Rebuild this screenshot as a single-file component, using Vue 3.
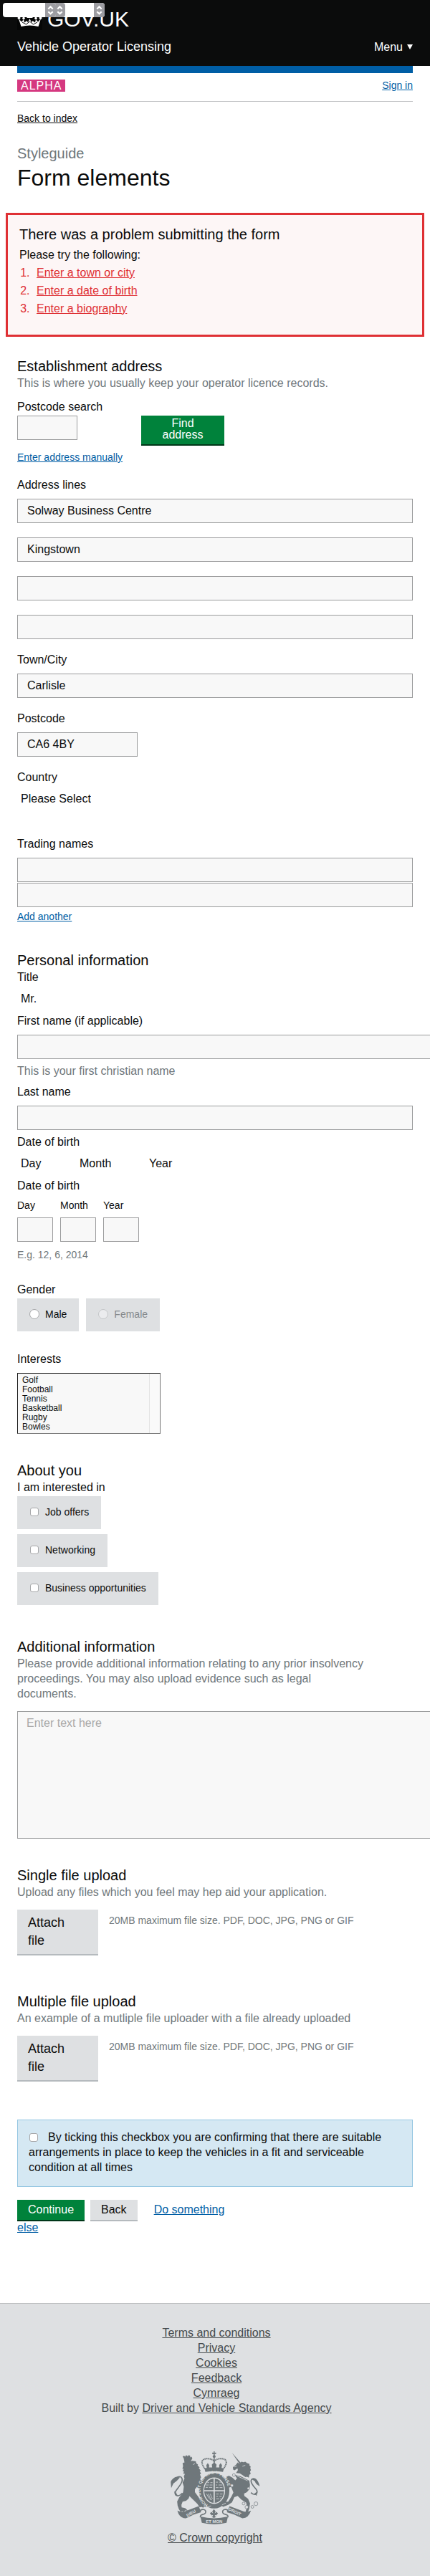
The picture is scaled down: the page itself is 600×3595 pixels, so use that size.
<script setup>
import { ref } from 'vue'

const overlays = [
  { id: 'year', cls: 'ov-c', label: 'Year' },
  { id: 'month', cls: 'ov-b', label: 'Month' },
  { id: 'day', cls: 'ov-a', label: 'Day' },
]
const errors = ['Enter a town or city', 'Enter a date of birth', 'Enter a biography']
const address = ref(['Solway Business Centre', 'Kingstown', '', ''])
const town = ref('Carlisle')
const postcode = ref('CA6 4BY')
const dateParts = ['Day', 'Month', 'Year']
const sports = ['Golf', 'Football', 'Tennis', 'Basketball', 'Rugby', 'Bowles']
const interests = ['Job offers', 'Networking', 'Business opportunities']
const uploads = [
  { title: 'Single file upload', hint: 'Upload any files which you feel may hep aid your application.' },
  { title: 'Multiple file upload', hint: 'An example of a mutliple file uploader with a file already uploaded' },
]
const footerLinks = ['Terms and conditions', 'Privacy', 'Cookies', 'Feedback', 'Cymraeg']
</script>

<template>
  <div class="page">
    <div class="overlay">
      <span v-for="o in overlays" :key="o.id" class="ov" :class="o.cls">
        <select :aria-label="o.label"><option></option></select>
        <svg viewBox="0 0 14 18" aria-hidden="true"><path d="M4 7.500 7 4.500 10 7.500M4 11 7 14 10 11" /></svg>
      </span>
    </div>

    <header class="top">
      <a href="#" class="logo" aria-label="GOV.UK">
        <svg class="crown" viewBox="0 0 35 30" aria-hidden="true">
          <rect width="35" height="30" fill="#050606" />
          <g fill="#fff">
            <path d="M2 14 5.500 25Q17.500 22 29.500 25L33 14 29 18.500 26 15 25 19.500 21.500 17 20 19.500 17.500 14 15 19.500 13.500 17 10 19.500 9 15 6 18.500Z" />
            <circle cx="2.500" cy="13" r="2" /><circle cx="3.500" cy="9.500" r="1.500" /><circle cx="32.500" cy="13" r="2" /><circle cx="31.500" cy="9.500" r="1.500" />
            <circle cx="9" cy="13.500" r="1.800" /><circle cx="26" cy="13.500" r="1.800" />
            <path d="M16.500 2h2v8h3v3h-8v-3h3z" />
          </g>
          <path d="M7 19l5.500 3 5-4 5 4 5.500-3" fill="none" stroke="#050606" />
        </svg>
        <span>GOV.UK</span>
      </a>
      <div class="top-row">
        <a href="#" class="service">Vehicle Operator Licensing</a>
        <button type="button" class="menu">Menu <span class="tri"></span></button>
      </div>
    </header>

    <main class="wrap">
      <div class="bar"></div>
      <div class="phase">
        <strong class="tag">ALPHA</strong>
        <a href="#" class="small">Sign in</a>
      </div>
      <a href="#" class="back small">Back to index</a>
      <p class="kicker">Styleguide</p>
      <h1>Form elements</h1>

      <section class="errors">
        <h2>There was a problem submitting the form</h2>
        <p>Please try the following:</p>
        <ol>
          <li v-for="e in errors" :key="e"><a href="#">{{ e }}</a></li>
        </ol>
      </section>

      <form @submit.prevent>
        <section class="first">
          <h2>Establishment address</h2>
          <p class="hint">This is where you usually keep your operator licence records.</p>
          <label class="search-label" for="search">Postcode search</label>
          <div class="search">
            <input id="search" type="text" class="field w-search">
            <button type="button" class="btn find">Find address</button>
          </div>
          <a href="#" class="small manual">Enter address manually</a>

          <label class="lines-label" for="line0">Address lines</label>
          <div class="lines">
            <input v-for="(l, i) in address" :id="'line' + i" :key="i" v-model="address[i]" type="text" class="field" :aria-label="'Address line ' + (i + 1)">
          </div>
          <div class="group">
            <label for="town">Town/City</label>
            <input id="town" v-model="town" type="text" class="field">
          </div>
          <div class="group">
            <label for="postcode">Postcode</label>
            <input id="postcode" v-model="postcode" type="text" class="field w-postcode">
          </div>
          <div class="group">
            <label for="country">Country</label>
            <select id="country" class="plain"><option>Please Select</option></select>
          </div>
          <div class="trading">
            <label for="trade1">Trading names</label>
            <div class="pair">
              <input id="trade1" type="text" class="field">
              <input type="text" class="field" aria-label="Second trading name">
            </div>
            <a href="#" class="small">Add another</a>
          </div>
        </section>

        <section class="personal">
          <h2>Personal information</h2>
          <label for="title">Title</label>
          <select id="title" class="plain"><option>Mr.</option></select>
          <label class="gap10" for="first">First name (if applicable)</label>
          <input id="first" type="text" class="field wide">
          <p class="hint after">This is your first christian name</p>
          <label class="gap8" for="last">Last name</label>
          <input id="last" type="text" class="field">
          <fieldset class="dob-select">
            <legend>Date of birth</legend>
            <div class="selects">
              <select v-for="d in dateParts" :key="d" class="plain" :class="'s-' + d" :aria-label="d"><option>{{ d }}</option></select>
            </div>
          </fieldset>
          <fieldset class="dob-input">
            <legend>Date of birth</legend>
            <div class="parts">
              <div v-for="d in dateParts" :key="d">
                <label :for="'dob' + d">{{ d }}</label>
                <input :id="'dob' + d" type="text" class="field">
              </div>
            </div>
            <p class="hint eg">E.g. 12, 6, 2014</p>
          </fieldset>
          <fieldset class="gender">
            <legend>Gender</legend>
            <div class="radios">
              <label class="choice"><input type="radio" name="gender"><span>Male</span></label>
              <label class="choice disabled"><input type="radio" name="gender" disabled><span>Female</span></label>
            </div>
          </fieldset>
          <div class="interests">
            <label for="interests">Interests</label>
            <select id="interests" multiple size="6" class="list">
              <option v-for="s in sports" :key="s">{{ s }}</option>
            </select>
          </div>
        </section>

        <section class="about">
          <h2>About you</h2>
          <fieldset>
            <legend>I am interested in</legend>
            <div class="checks">
              <label v-for="c in interests" :key="c" class="choice"><input type="checkbox"><span>{{ c }}</span></label>
            </div>
          </fieldset>
        </section>

        <section class="additional">
          <h2><label for="info">Additional information</label></h2>
          <p class="hint narrow">Please provide additional information relating to any prior insolvency proceedings. You may also upload evidence such as legal documents.</p>
          <textarea id="info" class="wide" placeholder="Enter text here"></textarea>
        </section>

        <section v-for="u in uploads" :key="u.title" class="upload">
          <h2>{{ u.title }}</h2>
          <p class="hint">{{ u.hint }}</p>
          <div class="attach-row">
            <button type="button" class="btn grey attach">Attach file</button>
            <p class="hint">20MB maximum file size. PDF, DOC, JPG, PNG or GIF</p>
          </div>
        </section>

        <label class="confirm"><input type="checkbox"><span>By ticking this checkbox you are confirming that there are suitable arrangements in place to keep the vehicles in a fit and serviceable condition at all times</span></label>

        <div class="actions">
          <button type="submit" class="btn">Continue</button>
          <button type="button" class="btn grey">Back</button>
          <a href="#">Do something else</a>
        </div>
      </form>
    </main>

    <footer>
      <ul>
        <li v-for="l in footerLinks" :key="l"><a href="#">{{ l }}</a></li>
        <li>Built by <a href="#">Driver and Vehicle Standards Agency</a></li>
      </ul>
      <a href="#" class="copyright">
        <svg class="crest" viewBox="84 62 376 308" aria-hidden="true">
          <g class="ink">
            <!-- crown -->
            <circle cx="267" cy="84" r="6" /><path d="M264 63h6l-1 5 6-1v7l-6-1 1 6h-6l1-6-6 1v-7l6 1z" />
            <path class="dots" d="M228 136C208 108 214 94 236 93 252 92 262 98 267 104 272 98 282 92 298 93 320 94 326 108 306 136" />
            <path class="line" d="M267 90V122" />
            <path d="M226 134q41-9 82 0l-4 15q-37-6-74 0zM236 134l-2-14 6-8 6 8-1 12zM259 132l-2-14 10-10 10 10-2 14zM289 132l-1-12 6-8 6 8-2 14z" />
            <!-- garter -->
            <ellipse cx="267" cy="228" rx="64" ry="75" />
            <!-- lion -->
            <path d="M139 92l-5-8 6-3 5 4 2-6 6 0 2 5 5-6 6 3 0 7 6-3 3 7-9 15-24 2z" />
            <path d="M134 112l14-6 28-4 14 2 1 8 8 6-2 4 9 8-4 2 9 12-5 1 6 12-5 2 5 14-4 4 9 15 12 8 11 12-3 6 8 14-7 4-8-7-6 7-7-8-5 6-8-13-10-9-8 10 0 12 22 30 18 12 6 10 1 12-8-4-4 6-8-4-7 2-10-15-33-32-4 10-10 9-15 4-5 14 1 10 16 4 10 10-12-1-4 6-8-3-6 4-8-13-5-14-2-18 9-17 16-21 3-24-5-17 8-17-3-9 5-11-7-1 3-10-6 0 4-10-5-1 3-10z" />
            <path class="line" d="M133 238C112 260 96 246 106 228 120 208 142 186 128 171 118 164 106 172 98 186" />
            <path d="M84 190q10-20 27-21l12 3q-14 17-28 26l-9 19zM98 230l8 6 6 10-8 2z" />
            <!-- unicorn -->
            <path d="M342 68l37 42-6 4z" />
            <path d="M372 114l10-8 9 2 7-2 8 6 10 3-1 6 6 5-2 7 3 8-4 6 3 10-6 4-2 12-8-4-6 2-24-16-16-2 8-12-2-7-12 8-6-3-1-10 12-10 8-10z" />
            <path d="M318 170l11-5 15 8 12 11 7-8-9-14 23 4 38 20 3 18-3 18-10 12-12 6 1 10 16 12 8 19-3 22-10 26-15 3 8-11 7-24-3-18-20-13-16-16-14 5-10 22-16 11-22 8-5-6 8-6 2-8 17-2 14-22 8-16-9-24-12 3 2 12-10-6-4-12 7-10-11-6-3 9-6-8z" />
            <path class="line" d="M422 236C438 252 456 240 444 222 430 208 414 186 428 178 440 174 446 184 450 194" />
            <path d="M426 180l16-2q12 8 17 31-17-7-20-20zM448 232l-12 8 10 10z" />
            <!-- ribbons -->
            <path d="M112 312q20 10 40 0l50-19 10 26q-33 8-64 25-28 0-36-32zM422 312q-20 10-40 0l-50-19-12 26q33 8 66 25 26 0 36-32z" />
            <path d="M209 337q57 15 116 0l-6 26q-52 12-104 0z" />
            <path class="line" d="M205 318C212 300 238 306 230 322 224 332 206 324 209 340M329 318C322 300 296 306 304 322 310 332 328 324 325 340" />
            <path d="M266 306l7 9-4 9 8-7 6 7-8 8-5-2 0 5 6 3-10 5-10-5 6-3 0-5-5 2-8-8 6-7 8 7-4-9z" />
          </g>
          <ellipse class="gap" cx="267" cy="228" rx="46" ry="56" />
          <ellipse class="ink" cx="267" cy="228" rx="42" ry="51" />
          <path class="cut" d="M267 177V279M225 228H309" />
          <path class="fine" d="M232 204h12m4 0h12M231 214h9m5 0h14M238 194h8m5 0h9M274 192h9m6 0h8M274 204h6m6 0h16M274 215h11m5 0h12M235 241q8 20 19 27M243 241q3 16 14 26M251 241q2 12 9 20M276 242h10m6 0h10M276 252h7m6 0h10M276 262h12m4 0h4" />
          <path class="fine" d="M386 125l12-4M352 128l10-4M178 118l8-4M364 166l44 20M300 288l16-8M236 296l18-4" />
          <g class="rings"><circle cx="350" cy="162" r="6" /><circle cx="342" cy="206" r="6" /><circle cx="411" cy="218" r="5" /><circle cx="391" cy="282" r="6" /><circle cx="404" cy="297" r="7" /><circle cx="428" cy="296" r="6" /><circle cx="443" cy="283" r="8" /></g>
          <path id="garter-line" class="none" d="M246 290A58 69 0 1 1 290 289" />
          <path id="ribbon-l" class="none" d="M154 339L202 312" />
          <path id="ribbon-r" class="none" d="M326 310L384 338" />
          <g class="words">
            <text><textPath href="#garter-line" startOffset="6">HONI SOIT QUI MAL Y PENSE</textPath></text>
            <text><textPath href="#ribbon-l">DIEU</textPath></text>
            <text><textPath href="#ribbon-r">DROIT</textPath></text>
            <text x="267" y="363" text-anchor="middle">ET MON</text>
          </g>
        </svg>
        <span>© Crown copyright</span>
      </a>
    </footer>
  </div>
</template>

<style>
body { background: #fff; }
</style>

<style scoped>
.page {
  position: relative;
  overflow-x: clip;
  font: 16px/21px "Liberation Sans", Arial, sans-serif;
  color: #0b0c0c;
}
h1, h2, p, ul, ol, fieldset, legend { margin: 0; padding: 0; border: 0; font-weight: 400; }
fieldset { min-width: 0; }
a { color: #005ea5; }
input, select, textarea, button { box-sizing: border-box; margin: 0; font: inherit; color: inherit; border-radius: 0; }
label, legend { display: block; }
h2 { font-size: 20px; line-height: 25px; }

.overlay .ov { position: absolute; top: 4px; height: 20px; border-radius: 4px; overflow: hidden; background: #fff; }
.ov-a { left: 4px; width: 74px; }
.ov-b { left: 53px; width: 38px; }
.ov-c { left: 80px; width: 66px; }
.ov select { appearance: none; display: block; width: 100%; height: 20px; border: 0; padding: 0; background: #fff; }
.ov svg { position: absolute; top: 0; right: 0; width: 15px; height: 20px; background: #9d9da2; fill: none; stroke: #fff; stroke-width: 2; pointer-events: none; }

.top { background: #0b0c0c; padding: 12px 24px 14px; }
.logo { display: flex; gap: 7px; height: 30px; color: #fff; font-size: 30px; line-height: 30px; text-decoration: none; width: max-content; }
.crown { width: 35px; height: 30px; }
.top-row { display: flex; justify-content: space-between; margin-top: 11px; line-height: 25px; }
.service { color: #fff; font-size: 18px; text-decoration: none; }
.menu { display: flex; align-items: center; gap: 6px; padding: 0; border: 0; background: none; color: #fff; line-height: 25px; }
.tri { border: 4px solid transparent; border-top: 7px solid #fff; border-bottom: 0; }

.wrap { padding: 0 24px 95px; }
.bar { height: 10px; background: #005ea5; }
.phase { display: flex; justify-content: space-between; padding: 9px 0 13px; border-bottom: 1px solid #bfc1c3; }
.tag { padding: 0 5px; background: #d53880; color: #fff; font-weight: 400; letter-spacing: 1px; line-height: 17px; }
.small { font-size: 14px; line-height: 18px; display: block; width: max-content; }
.phase .small { line-height: 17px; }
.back { margin-top: 14px; color: #0b0c0c; }
.kicker { margin-top: 28px; font-size: 20px; line-height: 25px; color: #6f777b; }
h1 { margin-top: 4px; font-size: 32px; line-height: 35px; }

.errors { margin: 31px -16px 0; padding: 15px 16px 24px; border: 3px solid #df3034; background: #fdf6f6; }
.errors p { margin-top: 5px; }
.errors ol { margin-top: 2px; padding-left: 19px; color: #df3034; line-height: 25px; }
.errors li { padding-left: 5px; }
.errors a { color: #df3034; }

.hint { color: #6f777b; }
.field { display: block; width: 100%; height: 34px; padding: 0 13px; border: 1px solid #9b9c9d; background: #f8f8f8; line-height: 21px; }
label + .field { margin-top: 9px; }
.plain { appearance: none; display: block; height: 21px; padding: 0 5px; border: 0; background: transparent; line-height: 21px; }
label + .plain { margin-top: 9px; }

.first { padding-top: 29px; }
.search-label { margin-top: 12px; }
.search { display: flex; align-items: flex-start; gap: 89px; margin-top: 2px; }
.w-search { width: 84px; }
.btn { padding: 5px 15px; border: 0; background: #00823b; box-shadow: 0 2px 0 #003618; color: #fff; line-height: 18px; }
.find { width: 116px; padding: 3px 20px 5px; line-height: 16px; }
.manual { margin-top: 9px; }
.lines-label { margin-top: 19px; }
.lines { display: grid; gap: 20px; margin-top: 9px; }
.group { margin-top: 18px; }
.w-postcode { width: 168px; }
.trading { margin-top: 42px; }
.pair { display: grid; gap: 1px; margin: 9px 0 4px; }

.personal { padding-top: 40px; }
.gap10 { margin-top: 10px; }
.gap8 { margin-top: 8px; }
.wide { width: 110%; }
.after { margin-top: 6px; }
.dob-select { margin-top: 6px; }
.selects { display: flex; padding-top: 9px; }
.s-Day { width: 82px; }
.s-Month { width: 97px; }
.dob-input { margin-top: 10px; }
.parts { display: flex; gap: 10px; padding-top: 8px; }
.parts label { font-size: 14px; line-height: 18px; }
.parts .field { width: 50px; margin-top: 8px; }
.eg { margin-top: 9px; font-size: 14px; line-height: 18px; }
.gender { margin-top: 29px; }
.radios { display: flex; gap: 10px; padding-top: 2px; }
.choice { display: flex; align-items: center; gap: 8px; width: max-content; padding: 13px 17px 15px; background: #dee0e2; font-size: 14px; line-height: 18px; }
input[type="radio"], input[type="checkbox"] { appearance: none; width: 14px; height: 14px; border: 1px solid #a6a7a9; border-radius: 50%; background: #fff; }
input[type="checkbox"] { width: 12px; height: 12px; margin: 0 1px; border-radius: 3px; }
.disabled { color: #85898c; }
.disabled input { background: #ebecee; border-color: #c4c6c8; }
.interests { margin-top: 28px; }
.list {
  display: block;
  width: 200px;
  height: 85px;
  margin-top: 9px;
  padding: 2px 6px;
  border: 1px solid #767676;
  border-top-color: #1d1d1d;
  border-left-color: #1d1d1d;
  background: linear-gradient(90deg, #f8f8f8 183px, #e4e4e4 183px 184px, #fafafa 184px);
  font-size: 12px;
  overflow: hidden;
}
.list option { display: block; height: 13px; min-height: 0; padding: 0; line-height: 13px; }

.about { padding-top: 39px; }
.checks { display: grid; gap: 7px; padding-top: 2px; }
.additional { padding-top: 46px; }
.narrow { width: 90%; }
textarea { display: block; height: 178px; margin-top: 14px; padding: 7px 12px; border: 1px solid #9b9c9d; background: #f8f8f8; line-height: 18px; resize: none; }
textarea::placeholder { color: #a9a9a9; }

.upload { padding-top: 39px; }
.upload + .upload { padding-top: 54px; }
.attach-row { display: flex; gap: 15px; margin-top: 14px; align-items: flex-start; }
.grey { background: #dee0e2; box-shadow: 0 2px 0 #b5babe; color: #0b0c0c; }
.attach { width: 113px; padding: 6px 30px 6px 15px; font-size: 18px; line-height: 25px; text-align: left; }
.attach-row .hint { margin-top: 6px; font-size: 14px; line-height: 18px; }

.confirm { margin-top: 55px; padding: 13px 15px 16px; border: 1px solid #95c6e2; background: #d5e8f3; }
.confirm input { margin: 0 14px 0 1px; vertical-align: -1px; }
.actions { width: 55%; margin-top: 18px; }
.actions .btn { margin-right: 8px; }
.actions a { padding-left: 15px; }

footer { padding: 30px 24px 43px; border-top: 1px solid #b9bbbd; background: #dee0e2; color: #454a4c; text-align: center; }
footer ul { list-style: none; padding-left: 4px; }
footer a { color: #454a4c; }
.copyright { display: grid; justify-items: center; gap: 8px; margin-top: 50px; }
.crest { width: 125px; height: 102px; }
.ink { fill: #6f777b; }
.gap { fill: #dee0e2; }
.line { fill: none; stroke: #6f777b; stroke-width: 5; }
.dots { fill: none; stroke: #6f777b; stroke-width: 6; stroke-dasharray: 5 2; }
.cut { stroke: #dee0e2; stroke-width: 5; fill: none; }
.fine { stroke: #c6cacd; stroke-width: 3; fill: none; }
.rings { fill: #dee0e2; stroke: #6f777b; stroke-width: 2; }
.none { fill: none; }
.words { fill: #dee0e2; font-size: 18px; font-weight: 700; }
</style>
